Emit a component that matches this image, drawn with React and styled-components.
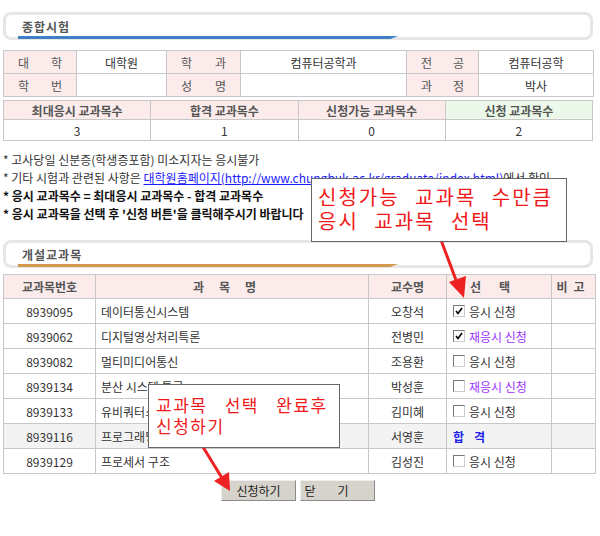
import styled, { createGlobalStyle } from "styled-components";

const GlobalStyle = createGlobalStyle`
  body {
    margin: 0;
    background: #fff;
    font-family: "Noto Sans CJK KR", "Noto Sans", sans-serif;
    font-size: 12px;
    color: #333;
  }
`;

const Page = styled.div`
  position: relative;
  width: 600px;
  height: 536px;
  padding: 12px 7px 0 3px;
  box-sizing: border-box;
`;

const SectionBox = styled.div`
  position: relative;
  height: 28px;
  box-sizing: border-box;
  border: 3px solid #e6e6e6;
  border-radius: 8px;
  display: flex;
  align-items: center;
  padding-left: 16px;
  margin-top: ${(p) => p.$top || 0}px;
  font-size: 12px;
  font-weight: bold;
  color: #555;
  letter-spacing: 1px;
`;

const SectionBar = styled.div`
  position: absolute;
  left: 12px;
  bottom: -2px;
  width: 380px;
  height: 3px;
  background: ${(p) => p.$color};
  clip-path: polygon(0 0, 100% 0, 98% 100%, 0 100%);
`;

const Table = styled.table`
  width: ${(p) => p.$width || 590}px;
  border-collapse: collapse;
  margin-top: ${(p) => p.$top || 0}px;
  table-layout: fixed;
  td,
  th {
    border: 1px solid #c8c8c8;
    padding: 0;
    font-size: 12px;
    font-weight: normal;
  }
`;

const Label = styled.td`
  background: #fbebeb;
  color: #555;
  height: 22px;
  div {
    display: flex;
    justify-content: space-between;
    padding: 0 14px;
  }
`;

const Value = styled.td`
  text-align: center;
  color: #333;
`;

const HeadCell = styled.th`
  background: ${(p) => (p.$green ? "#ecf9ea" : "#fbebeb")};
  color: #555;
  height: ${(p) => p.$h || 18}px;
  font-weight: bold !important;
  letter-spacing: ${(p) => p.$spacing || 0}px;
`;

const NumCell = styled.td`
  text-align: center;
  height: 20px;
`;

const Notes = styled.ul`
  list-style: none;
  margin: 10px 0 0 0;
  padding: 0;
  li {
    line-height: 18px;
    font-size: 12px;
    color: #333;
  }
`;

const Note = styled.li`
  font-weight: ${(p) => (p.$bold ? "bold" : "normal")};
  color: ${(p) => (p.$bold ? "#111" : "#333")} !important;
`;

const Link = styled.a`
  color: #1a1aff;
  text-decoration: underline;
`;

const Row = styled.tr`
  background: ${(p) => (p.$shade ? "#f3f3f3" : "#fff")};
  td {
    height: 24px;
  }
`;

const Center = styled.td`
  text-align: center;
`;

const Left = styled.td`
  padding-left: 5px !important;
`;

const Pick = styled.td`
  padding-left: 6px !important;
`;

const Choice = styled.label`
  display: flex;
  align-items: center;
  gap: 4px;
  color: ${(p) => (p.$retry ? "#9b30ff" : "#333")};
`;

const Box = styled.span`
  width: 10px;
  height: 10px;
  border: 1px solid #777;
  border-right-color: #ccc;
  border-bottom-color: #ccc;
  background: #fff;
  display: inline-flex;
  align-items: center;
  justify-content: center;
`;

const Passed = styled.span`
  color: #2222ee;
  font-weight: bold;
  letter-spacing: 10px;
`;

const Buttons = styled.div`
  display: flex;
  justify-content: center;
  gap: 4px;
  margin-top: 6px;
`;

const Button = styled.button`
  width: 75px;
  height: 21px;
  background: #d6d3cc;
  border: 1px solid #8a8a8a;
  border-top-color: #eee;
  border-left-color: #eee;
  font-family: inherit;
  font-size: 12px;
  color: #222;
  letter-spacing: ${(p) => p.$spacing || 0}px;
  padding: 0;
`;

const Callout = styled.div`
  position: absolute;
  left: ${(p) => p.$x}px;
  top: ${(p) => p.$y}px;
  width: ${(p) => p.$w}px;
  height: ${(p) => p.$h}px;
  box-sizing: border-box;
  background: #fff;
  border: 1px solid #666;
  padding: ${(p) => p.$pad};
  color: #f01818;
  font-size: ${(p) => p.$size}px;
  line-height: ${(p) => p.$lh}px;
  letter-spacing: ${(p) => p.$ls}px;
  word-spacing: ${(p) => p.$ws}px;
  white-space: nowrap;
`;

const Overlay = styled.svg`
  position: absolute;
  left: 0;
  top: 0;
  pointer-events: none;
`;

const Check = () => (
  <svg width="8" height="8" viewBox="0 0 8 8">
    <path d="M1 4 L3 6.5 L7 1" stroke="#000" strokeWidth="1.6" fill="none" />
  </svg>
);

const courses = [
  { no: "8939095", name: "데이터통신시스템", prof: "오창석", state: "checked" },
  { no: "8939062", name: "디지털영상처리특론", prof: "전병민", state: "retryChecked" },
  { no: "8939082", name: "멀티미디어통신", prof: "조용환", state: "open" },
  { no: "8939134", name: "분산 시스템 특론", prof: "박성훈", state: "retry" },
  { no: "8939133", name: "유비쿼터스 시공지논술", prof: "김미혜", state: "open" },
  { no: "8939116", name: "프로그래밍 언어특론", prof: "서영훈", state: "pass" },
  { no: "8939129", name: "프로세서 구조", prof: "김성진", state: "open" },
];

const renderChoice = (state) => {
  if (state === "pass") return <Passed>합격</Passed>;
  const retry = state === "retry" || state === "retryChecked";
  const checked = state === "checked" || state === "retryChecked";
  return (
    <Choice $retry={retry}>
      <Box>{checked && <Check />}</Box>
      {retry ? "재응시 신청" : "응시 신청"}
    </Choice>
  );
};

const Spread = ({ a, b }) => (
  <div>
    <span>{a}</span>
    <span>{b}</span>
  </div>
);

const App = () => {
  return (
    <>
      <GlobalStyle />
      <Page>
        <SectionBox>
          종합시험
          <SectionBar $color="#3d80c6" />
        </SectionBox>

        <Table $top={10}>
          <colgroup>
            <col style={{ width: 73 }} />
            <col style={{ width: 90 }} />
            <col style={{ width: 74 }} />
            <col style={{ width: 166 }} />
            <col style={{ width: 72 }} />
            <col style={{ width: 115 }} />
          </colgroup>
          <tbody>
            <tr>
              <Label><Spread a="대" b="학" /></Label>
              <Value>대학원</Value>
              <Label><Spread a="학" b="과" /></Label>
              <Value>컴퓨터공학과</Value>
              <Label><Spread a="전" b="공" /></Label>
              <Value>컴퓨터공학</Value>
            </tr>
            <tr>
              <Label><Spread a="학" b="번" /></Label>
              <Value></Value>
              <Label><Spread a="성" b="명" /></Label>
              <Value></Value>
              <Label><Spread a="과" b="정" /></Label>
              <Value>박사</Value>
            </tr>
          </tbody>
        </Table>

        <Table $top={3}>
          <tbody>
            <tr>
              <HeadCell>최대응시 교과목수</HeadCell>
              <HeadCell>합격 교과목수</HeadCell>
              <HeadCell>신청가능 교과목수</HeadCell>
              <HeadCell $green>신청 교과목수</HeadCell>
            </tr>
            <tr>
              <NumCell>3</NumCell>
              <NumCell>1</NumCell>
              <NumCell>0</NumCell>
              <NumCell>2</NumCell>
            </tr>
          </tbody>
        </Table>

        <Notes>
          <Note>* 고사당일 신분증(학생증포함) 미소지자는 응시불가</Note>
          <Note>
            * 기타 시험과 관련된 사항은{" "}
            <Link href="#">대학원홈페이지(http://www.chungbuk.ac.kr/graduate/index.html)</Link>
            에서 확인
          </Note>
          <Note $bold>* 응시 교과목수 = 최대응시 교과목수 - 합격 교과목수</Note>
          <Note $bold>* 응시 교과목을 선택 후 '신청 버튼'을 클릭해주시기 바랍니다</Note>
        </Notes>

        <SectionBox $top={17}>
          개설교과목
          <SectionBar $color="#d39a4e" />
        </SectionBox>

        <Table $top={6} $width={592}>
          <colgroup>
            <col style={{ width: 92 }} />
            <col style={{ width: 273 }} />
            <col style={{ width: 78 }} />
            <col style={{ width: 105 }} />
            <col style={{ width: 44 }} />
          </colgroup>
          <thead>
            <tr>
              <HeadCell $h={23}>교과목번호</HeadCell>
              <HeadCell $h={23} $spacing={15}>과목명</HeadCell>
              <HeadCell $h={23}>교수명</HeadCell>
              <HeadCell $h={23} $spacing={18}>선택</HeadCell>
              <HeadCell $h={23} $spacing={6}>비고</HeadCell>
            </tr>
          </thead>
          <tbody>
            {courses.map((c) => (
              <Row key={c.no} $shade={c.state === "pass"}>
                <Center>{c.no}</Center>
                <Left>{c.name}</Left>
                <Center>{c.prof}</Center>
                <Pick>{renderChoice(c.state)}</Pick>
                <td></td>
              </Row>
            ))}
          </tbody>
        </Table>

        <Buttons>
          <Button>신청하기</Button>
          <Button $spacing={22}>닫기</Button>
        </Buttons>

        <Overlay width="600" height="536">
          <line x1="441" y1="240" x2="456" y2="280" stroke="#ee2222" strokeWidth="3" />
          <path d="M449 282 L464 298 L466 276 Z" fill="#ee2222" />
          <line x1="203" y1="447" x2="222" y2="478" stroke="#ee2222" strokeWidth="3" />
          <path d="M214 481 L230 491 L229 472 Z" fill="#ee2222" />
        </Overlay>

        <Callout
          $x={311}
          $y={178}
          $w={256}
          $h={64}
          $pad="6px 0 0 6px"
          $size={20}
          $lh={24}
          $ls={2}
          $ws={9}
        >
          신청가능 교과목 수만큼
          <br />
          응시 교과목 선택
        </Callout>
        <Callout
          $x={148}
          $y={384}
          $w={192}
          $h={64}
          $pad="9px 0 0 7px"
          $size={17}
          $lh={21}
          $ls={1.5}
          $ws={12}
        >
          교과목 선택 완료후
          <br />
          신청하기
        </Callout>
      </Page>
    </>
  );
};

export default App;
